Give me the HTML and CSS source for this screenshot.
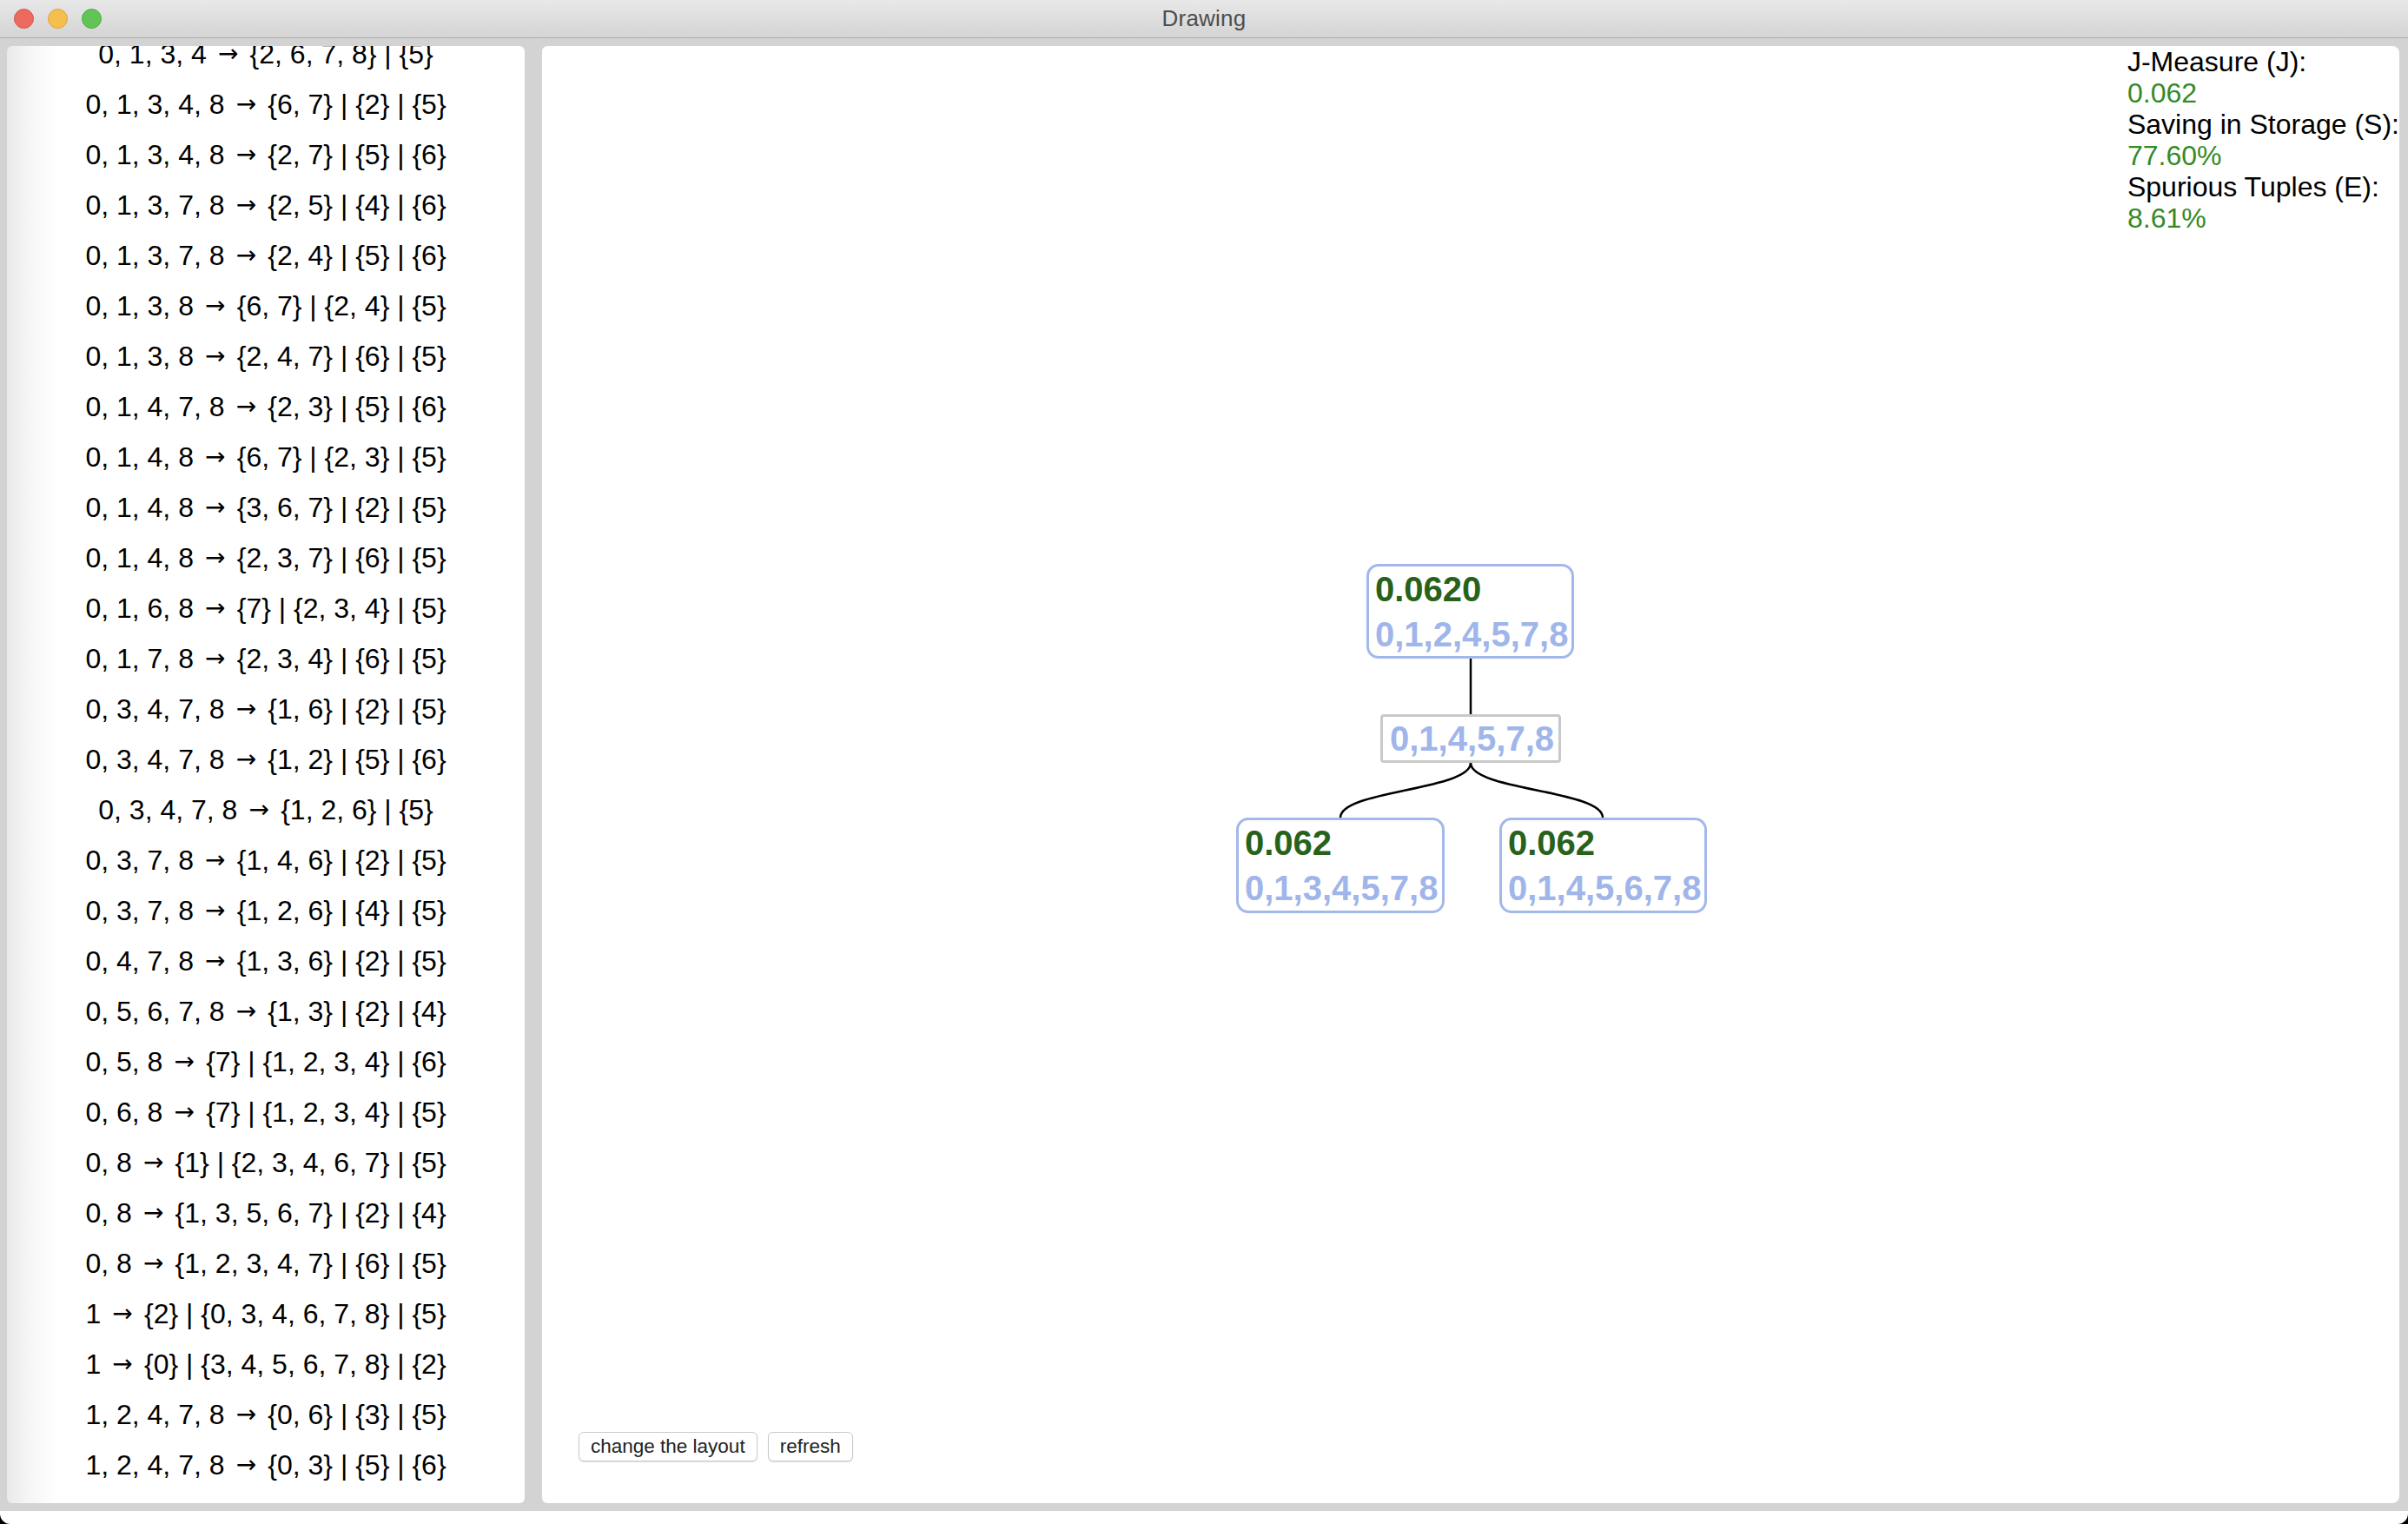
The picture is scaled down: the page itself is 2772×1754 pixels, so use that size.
FILE: index.html
```html
<!DOCTYPE html>
<html>
<head>
<meta charset="utf-8">
<title>Drawing</title>
<link rel="stylesheet" href="styles.css">
</head>
<body>
<div class="window">
  <div class="titlebar">
    <div class="lights">
      <span class="light red"></span>
      <span class="light yellow"></span>
      <span class="light green"></span>
    </div>
    <div class="title">Drawing</div>
  </div>
  <div class="content">
    <div class="left-panel">
      <div class="list">
        <div class="row">0, 1, 3, 4 <span class="arr">→</span> {2, 6, 7, 8} | {5}</div>
        <div class="row">0, 1, 3, 4, 8 <span class="arr">→</span> {6, 7} | {2} | {5}</div>
        <div class="row">0, 1, 3, 4, 8 <span class="arr">→</span> {2, 7} | {5} | {6}</div>
        <div class="row">0, 1, 3, 7, 8 <span class="arr">→</span> {2, 5} | {4} | {6}</div>
        <div class="row">0, 1, 3, 7, 8 <span class="arr">→</span> {2, 4} | {5} | {6}</div>
        <div class="row">0, 1, 3, 8 <span class="arr">→</span> {6, 7} | {2, 4} | {5}</div>
        <div class="row">0, 1, 3, 8 <span class="arr">→</span> {2, 4, 7} | {6} | {5}</div>
        <div class="row">0, 1, 4, 7, 8 <span class="arr">→</span> {2, 3} | {5} | {6}</div>
        <div class="row">0, 1, 4, 8 <span class="arr">→</span> {6, 7} | {2, 3} | {5}</div>
        <div class="row">0, 1, 4, 8 <span class="arr">→</span> {3, 6, 7} | {2} | {5}</div>
        <div class="row">0, 1, 4, 8 <span class="arr">→</span> {2, 3, 7} | {6} | {5}</div>
        <div class="row">0, 1, 6, 8 <span class="arr">→</span> {7} | {2, 3, 4} | {5}</div>
        <div class="row">0, 1, 7, 8 <span class="arr">→</span> {2, 3, 4} | {6} | {5}</div>
        <div class="row">0, 3, 4, 7, 8 <span class="arr">→</span> {1, 6} | {2} | {5}</div>
        <div class="row">0, 3, 4, 7, 8 <span class="arr">→</span> {1, 2} | {5} | {6}</div>
        <div class="row">0, 3, 4, 7, 8 <span class="arr">→</span> {1, 2, 6} | {5}</div>
        <div class="row">0, 3, 7, 8 <span class="arr">→</span> {1, 4, 6} | {2} | {5}</div>
        <div class="row">0, 3, 7, 8 <span class="arr">→</span> {1, 2, 6} | {4} | {5}</div>
        <div class="row">0, 4, 7, 8 <span class="arr">→</span> {1, 3, 6} | {2} | {5}</div>
        <div class="row">0, 5, 6, 7, 8 <span class="arr">→</span> {1, 3} | {2} | {4}</div>
        <div class="row">0, 5, 8 <span class="arr">→</span> {7} | {1, 2, 3, 4} | {6}</div>
        <div class="row">0, 6, 8 <span class="arr">→</span> {7} | {1, 2, 3, 4} | {5}</div>
        <div class="row">0, 8 <span class="arr">→</span> {1} | {2, 3, 4, 6, 7} | {5}</div>
        <div class="row">0, 8 <span class="arr">→</span> {1, 3, 5, 6, 7} | {2} | {4}</div>
        <div class="row">0, 8 <span class="arr">→</span> {1, 2, 3, 4, 7} | {6} | {5}</div>
        <div class="row">1 <span class="arr">→</span> {2} | {0, 3, 4, 6, 7, 8} | {5}</div>
        <div class="row">1 <span class="arr">→</span> {0} | {3, 4, 5, 6, 7, 8} | {2}</div>
        <div class="row">1, 2, 4, 7, 8 <span class="arr">→</span> {0, 6} | {3} | {5}</div>
        <div class="row">1, 2, 4, 7, 8 <span class="arr">→</span> {0, 3} | {5} | {6}</div>
      </div>
    </div>
    <div class="right-panel">
      <div class="canvas">
        <svg class="links" width="2138" height="1600" viewBox="0 0 2138 1600">
          <path d="M1069 705 L1069 769" />
          <path d="M1069 825 C1069 856.5 919 856.5 919 888" />
          <path d="M1069 825 C1069 856.5 1221 856.5 1221 888" />
        </svg>
        <div class="node node-root">
          <div class="val">0.0620</div>
          <div class="set">0,1,2,4,5,7,8</div>
        </div>
        <div class="node node-split">
          <div class="set">0,1,4,5,7,8</div>
        </div>
        <div class="node node-left">
          <div class="val">0.062</div>
          <div class="set">0,1,3,4,5,7,8</div>
        </div>
        <div class="node node-right">
          <div class="val">0.062</div>
          <div class="set">0,1,4,5,6,7,8</div>
        </div>
        <div class="stats">
          <div>J-Measure (J):</div>
          <div class="good">0.062</div>
          <div>Saving in Storage (S):</div>
          <div class="good">77.60%</div>
          <div>Spurious Tuples (E):</div>
          <div class="good">8.61%</div>
        </div>
      </div>
      <div class="toolbar">
        <button class="btn">change the layout</button>
        <button class="btn">refresh</button>
      </div>
    </div>
  </div>
</div>
</body>
</html>
```

FILE: styles.css
```css
html, body {
  margin: 0;
  padding: 0;
  background: #000;
}

body {
  width: 2772px;
  height: 1754px;
  overflow: hidden;
  font-family: "Liberation Sans", Arial, sans-serif;
}

.window {
  width: 2772px;
  height: 1754px;
  background: #fff;
  border-radius: 0 0 12px 12px;
  overflow: hidden;
  display: flex;
  flex-direction: column;
}

.titlebar {
  position: relative;
  height: 43px;
  flex: none;
  background: linear-gradient(to bottom, #e9e8e9 0%, #d5d4d5 100%);
  border-bottom: 1px solid #acacac;
  display: flex;
  align-items: center;
  justify-content: center;
}

.lights {
  position: absolute;
  left: 16px;
  top: 10px;
  display: flex;
  gap: 16px;
}

.light {
  width: 23px;
  height: 23px;
  border-radius: 50%;
  box-sizing: border-box;
  display: block;
}

.light.red { background: #ed6a5e; border: 1px solid #d5544a; }
.light.yellow { background: #f5bf4f; border: 1px solid #d9a33a; }
.light.green { background: #61c454; border: 1px solid #4fa941; }

.title {
  font-size: 26px;
  color: #4d4d4d;
  letter-spacing: 0.2px;
}

.content {
  height: 1695px;
  flex: none;
  background: #d3d3d3;
  box-sizing: border-box;
  padding: 9px 10px 9px 8px;
  display: flex;
  gap: 20px;
}

.left-panel {
  width: 596px;
  flex: none;
  overflow: hidden;
  border-radius: 6px;
  background: linear-gradient(to right, #e9e9e9 0px, #f6f6f6 25px, #ffffff 60px);
}

.list {
  margin-top: -20px;
}

.row {
  height: 58px;
  line-height: 58px;
  text-align: center;
  font-size: 32px;
  color: #000;
  white-space: nowrap;
}

.arr {
  display: inline-block;
  width: 32px;
  text-align: center;
  font-family: "DejaVu Sans", sans-serif;
  font-size: 28px;
  line-height: 58px;
  vertical-align: top;
}

.right-panel {
  flex: 1;
  background: #fff;
  border-radius: 6px 8px 8px 6px;
  display: flex;
  flex-direction: column;
  overflow: hidden;
}

.canvas {
  position: relative;
  flex: 1;
}

.links {
  position: absolute;
  left: 0;
  top: 0;
}

.links path {
  fill: none;
  stroke: #000;
  stroke-width: 2.5;
}

.node {
  position: absolute;
  box-sizing: border-box;
  border: 3px solid #a3b8ea;
  border-radius: 14px;
  background: #fff;
  padding: 0 6px 0 7px;
  font-weight: bold;
  font-size: 40px;
  line-height: 52px;
  white-space: nowrap;
}

.node .val { color: #28621a; }
.node .set { color: #a0b5e9; }

.node-root { left: 949px; top: 596px; width: 239px; height: 109px; }
.node-left { left: 799px; top: 888px; width: 240px; height: 110px; }
.node-right { left: 1102px; top: 888px; width: 239px; height: 110px; }

.node-split {
  left: 965px;
  top: 769px;
  width: 208px;
  height: 56px;
  border-color: #c9c9c9;
  border-radius: 4px;
  line-height: 50px;
  padding: 0 8px;
}

.stats {
  position: absolute;
  right: 0;
  top: 0;
  font-size: 32px;
  line-height: 36px;
  color: #000;
  white-space: nowrap;
}

.stats .good { color: #358a27; }

.toolbar {
  flex: none;
  display: flex;
  gap: 12px;
  padding: 0 0 48px 42px;
}

.btn {
  height: 34px;
  box-sizing: border-box;
  padding: 0 13px;
  font-family: "Liberation Sans", Arial, sans-serif;
  font-size: 22.5px;
  color: #222;
  background: #fff;
  border: 1px solid #c9c9c9;
  border-radius: 6px;
  box-shadow: 0 1px 1px rgba(0, 0, 0, 0.12);
  line-height: 32px;
}
```
